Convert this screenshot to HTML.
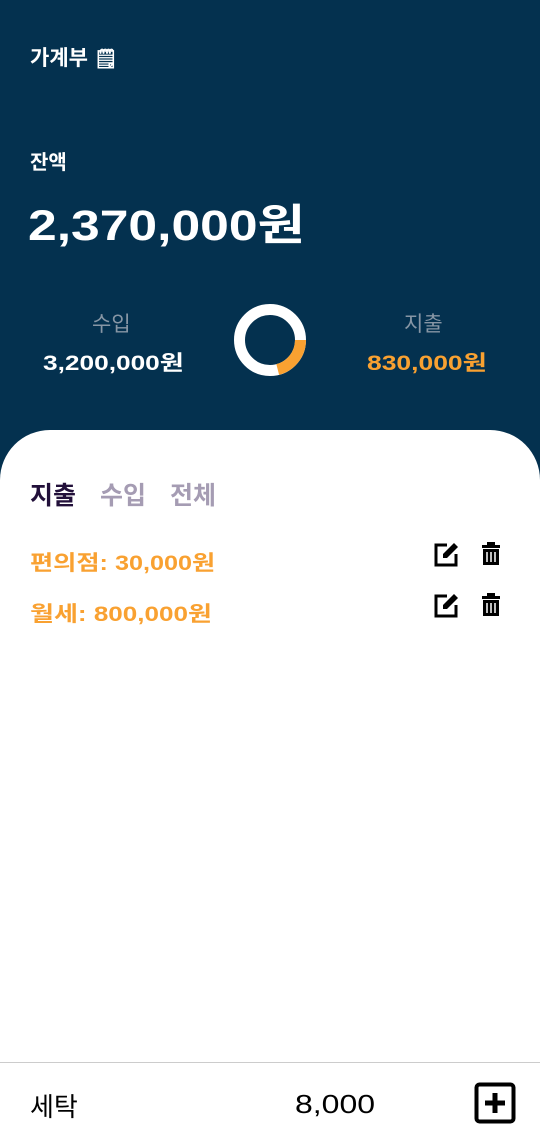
<!DOCTYPE html>
<html><head><meta charset="utf-8"><style>
*{margin:0;padding:0;box-sizing:border-box}
body{width:540px;height:1148px;background:#04314f;font-family:"Liberation Sans","Noto Sans CJK KR",sans-serif;position:relative;overflow:hidden}
.a{position:absolute;white-space:nowrap;transform-origin:left center}
.panel{position:absolute;left:0;top:430px;width:540px;height:718px;background:#fff;border-radius:50px 50px 0 0}
</style></head><body>
<div class="a" style="left:30px;top:42px;font-size:21px;font-weight:bold;color:#fff">가계부 <span style="font-size:19px">🗒</span></div>
<div class="a" style="left:30px;top:146px;font-size:20px;font-weight:bold;color:#fff">잔액</div>
<div class="a" style="left:28px;top:191px;font-size:43px;font-weight:bold;color:#fff;transform:scaleX(1.2)">2,370,000원</div>
<div class="a" style="left:92px;top:308px;font-size:21px;color:#8796a5">수입</div>
<div class="a" style="left:43px;top:347px;font-size:21px;font-weight:bold;color:#fff;transform:scaleX(1.25)">3,200,000원</div>
<div class="a" style="left:404px;top:308px;font-size:21px;color:#8796a5">지출</div>
<div class="a" style="left:367px;top:347px;font-size:21px;font-weight:bold;color:#f9a131;transform:scaleX(1.26)">830,000원</div>
<svg class="a" style="left:232px;top:302px" width="76" height="76" viewBox="0 0 76 76">
<circle cx="38" cy="38" r="30.5" fill="none" stroke="#fff" stroke-width="11"/>
<circle cx="38" cy="38" r="30.5" fill="none" stroke="#f9a131" stroke-width="11" stroke-dasharray="40 200"/>
</svg>
<div class="panel"></div>
<div class="a" style="left:30px;top:476px;font-size:25px;font-weight:bold;color:#22103a">지출</div>
<div class="a" style="left:100px;top:476px;font-size:25px;font-weight:bold;color:#a59cb3">수입</div>
<div class="a" style="left:170px;top:476px;font-size:25px;font-weight:bold;color:#a59cb3">전체</div>
<div class="a" style="left:30px;top:547px;font-size:21px;font-weight:bold;color:#f9a131;transform:scaleX(1.2)">편의점: 30,000원</div>
<div class="a" style="left:30px;top:598px;font-size:21px;font-weight:bold;color:#f9a131;transform:scaleX(1.24)">월세: 800,000원</div>
<svg class="a" style="left:434px;top:541px" width="70" height="26" viewBox="0 0 70 26">
<path d="M13 4H2v20h20V13" fill="none" stroke="#000" stroke-width="3"/>
<path d="M9 13l11-11 4 4-11 11H9z" fill="#000"/>
<path d="M48 4h18v3H48zM53 1h8v3h-8zM49 8h16v16H49z" fill="#000"/>
<path d="M53 11v10M57 11v10M61 11v10" stroke="#fff" stroke-width="1.5"/>
</svg>
<svg class="a" style="left:434px;top:592px" width="70" height="26" viewBox="0 0 70 26">
<path d="M13 4H2v20h20V13" fill="none" stroke="#000" stroke-width="3"/>
<path d="M9 13l11-11 4 4-11 11H9z" fill="#000"/>
<path d="M48 4h18v3H48zM53 1h8v3h-8zM49 8h16v16H49z" fill="#000"/>
<path d="M53 11v10M57 11v10M61 11v10" stroke="#fff" stroke-width="1.5"/>
</svg>
<div class="a" style="left:0;top:1062px;width:540px;height:1px;background:#ccc"></div>
<div class="a" style="left:30px;top:1087px;font-size:26px;color:#000">세탁</div>
<div class="a" style="left:295px;top:1089px;font-size:26px;color:#000;transform:scaleX(1.23)">8,000</div>
<svg class="a" style="left:474px;top:1082px" width="42" height="42" viewBox="0 0 42 42">
<rect x="2.5" y="2.5" width="37" height="37" rx="3" fill="none" stroke="#000" stroke-width="4"/>
<path d="M21 11v20M11 21h20" stroke="#000" stroke-width="5"/>
</svg>
</body></html>
